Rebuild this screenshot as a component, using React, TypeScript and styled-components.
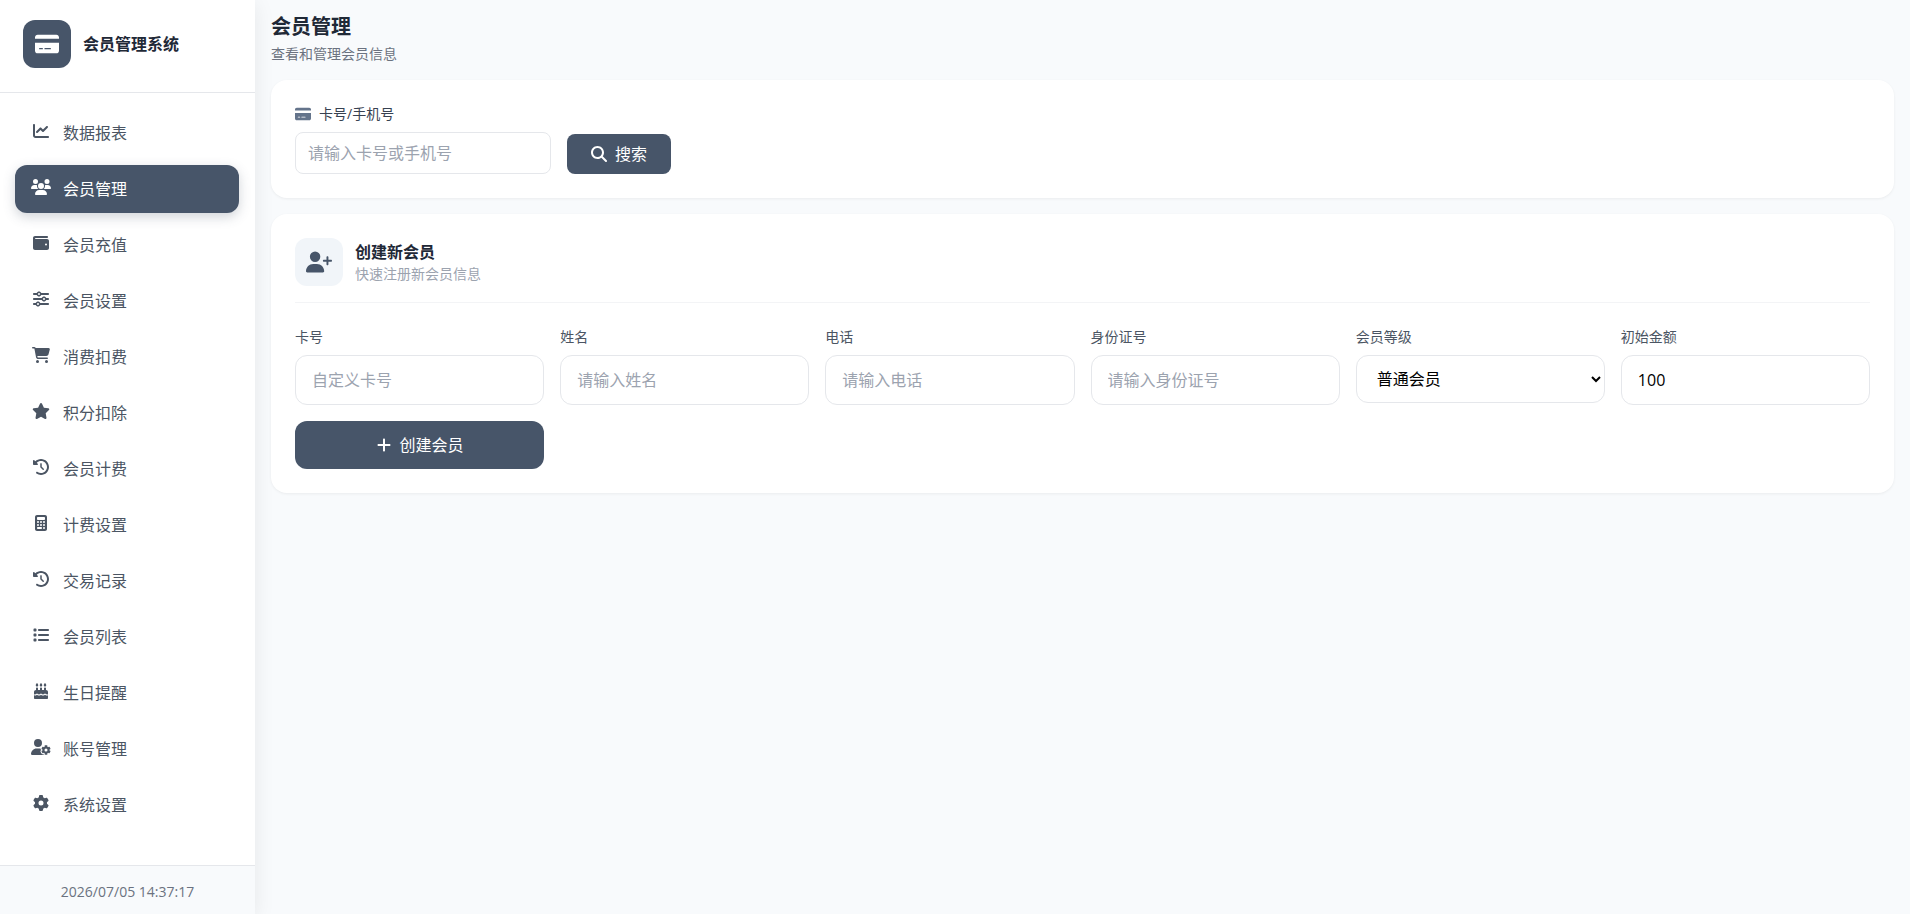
import React from "react";
import styled, { createGlobalStyle, css } from "styled-components";
import type { IconType } from "react-icons";
import {
  FaCakeCandles,
  FaCalculator,
  FaCartShopping,
  FaChartLine,
  FaClockRotateLeft,
  FaCreditCard,
  FaGear,
  FaList,
  FaMagnifyingGlass,
  FaPlus,
  FaSliders,
  FaStar,
  FaUserGear,
  FaUserPlus,
  FaUsers,
  FaWallet,
} from "react-icons/fa6";

const GlobalStyle = createGlobalStyle`
  *, *::before, *::after { box-sizing: border-box; }
  body {
    margin: 0;
    background: #f8fafc;
    color: #1f2937;
    font-family: "Open Sans", "Noto Sans CJK SC", sans-serif;
    font-size: 16px;
    line-height: 24px;
  }
  h1, h2, p { margin: 0; }
  button, input, select { font: inherit; }
  svg { display: block; flex: none; }
`;

const Page = styled.div`
  display: flex;
  min-height: 100vh;
`;

const Sidebar = styled.aside`
  flex: none;
  display: flex;
  flex-direction: column;
  width: 255px;
  background: #fff;
  box-shadow: 0 4px 20px rgba(0, 0, 0, 0.08);
`;

const Brand = styled.div`
  display: flex;
  gap: 12px;
  height: 93px;
  padding: 20px 23px;
  border-bottom: 1px solid #e5e7eb;
`;

const BrandName = styled.span`
  color: #1f2937;
  font-weight: 700;
  line-height: 48px;
`;

const IconTile = styled.span<{ $tone: "dark" | "light" }>`
  display: flex;
  flex: none;
  align-items: center;
  justify-content: center;
  width: 48px;
  height: 48px;
  border-radius: 12px;
  background: ${(p) => (p.$tone === "dark" ? "#475569" : "#f1f5f9")};
  color: ${(p) => (p.$tone === "dark" ? "#fff" : "#475569")};

  svg {
    width: ${(p) => (p.$tone === "dark" ? 24 : 26)}px;
    height: 24px;
  }
`;

const Nav = styled.nav`
  display: flex;
  flex: 1;
  flex-direction: column;
  gap: 8px;
  padding: 16px 16px 16px 15px;
`;

const NavLink = styled.a<{ $active: boolean }>`
  display: flex;
  align-items: center;
  gap: 12px;
  height: 48px;
  padding: 0 16px;
  border-radius: 12px;
  color: #4b5563;
  text-decoration: none;
  ${(p) =>
    p.$active &&
    css`
      background: #475569;
      color: #fff;
      box-shadow: 0 4px 12px rgba(71, 85, 105, 0.25);
    `}
`;

const NavIcon = styled.span`
  padding-bottom: 4px;

  svg {
    width: 20px;
    height: 16px;
  }
`;

const Clock = styled.footer`
  height: 49px;
  padding-top: 14px;
  border-top: 1px solid #e5e7eb;
  background: #f8fafc;
  color: #6b7280;
  font-size: 14px;
  text-align: center;
`;

const Main = styled.main`
  flex: 1;
  min-width: 0;
  padding: 12px 16px;
`;

const PageTitle = styled.h1`
  font-size: 20px;
  font-weight: 700;
  line-height: 30px;
`;

const Subtitle = styled.p<{ $muted?: boolean }>`
  color: ${(p) => (p.$muted ? "#9ca3af" : "#6b7280")};
  font-size: 14px;
  line-height: 20px;
`;

const PageHeader = styled.header`
  display: flex;
  flex-direction: column;
  gap: 2px;
  margin-bottom: 16px;
`;

const Card = styled.section`
  margin-bottom: 16px;
  padding: 24px;
  border-radius: 16px;
  background: #fff;
  box-shadow: 0 1px 3px rgba(0, 0, 0, 0.06);
`;

const SearchRow = styled.form`
  display: flex;
  align-items: flex-end;
  gap: 16px;
`;

const Field = styled.div`
  display: flex;
  flex-direction: column;
  gap: 8px;
  min-width: 0;
`;

const Label = styled.label`
  display: flex;
  align-items: center;
  gap: 8px;
  color: #4b5563;
  font-size: 14px;
  line-height: 20px;
`;

const SearchLabel = styled(Label)`
  color: #374151;

  svg { color: #64748b; }
`;

const control = css`
  width: 100%;
  border: 1px solid #e5e7eb;
  background: #fff;
  color: #000;
`;

const SearchInput = styled.input`
  ${control}
  width: 256px;
  height: 42px;
  padding: 0 12px;
  border-radius: 8px;
  &::placeholder { color: #9ca3af; }
`;

const TextInput = styled.input`
  ${control}
  height: 50px;
  padding: 0 16px;
  border-radius: 12px;
  &::placeholder { color: #9ca3af; }
`;

const Select = styled.select`
  ${control}
  height: 48px;
  padding: 0 16px;
  border-radius: 12px;
`;

const Button = styled.button<{ $large?: boolean }>`
  display: flex;
  align-items: center;
  justify-content: center;
  gap: 8px;
  height: ${(p) => (p.$large ? 48 : 40)}px;
  padding: 0 24px;
  border: 0;
  border-radius: ${(p) => (p.$large ? 12 : 8)}px;
  background: #475569;
  color: #fff;
  cursor: pointer;
`;

const CardHeader = styled.header`
  display: flex;
  align-items: center;
  gap: 12px;
  margin-bottom: 24px;
  padding-bottom: 16px;
  border-bottom: 1px solid #f3f4f6;
`;

const CardTitle = styled.h2`
  font-size: 16px;
  font-weight: 700;
  line-height: 24px;
`;

const FormGrid = styled.form`
  display: grid;
  grid-template-columns: repeat(6, minmax(0, 1fr));
  gap: 16px;
`;

const navItems: { label: string; icon: IconType }[] = [
  { label: "数据报表", icon: FaChartLine },
  { label: "会员管理", icon: FaUsers },
  { label: "会员充值", icon: FaWallet },
  { label: "会员设置", icon: FaSliders },
  { label: "消费扣费", icon: FaCartShopping },
  { label: "积分扣除", icon: FaStar },
  { label: "会员计费", icon: FaClockRotateLeft },
  { label: "计费设置", icon: FaCalculator },
  { label: "交易记录", icon: FaClockRotateLeft },
  { label: "会员列表", icon: FaList },
  { label: "生日提醒", icon: FaCakeCandles },
  { label: "账号管理", icon: FaUserGear },
  { label: "系统设置", icon: FaGear },
];

const textFields = [
  { id: "card", label: "卡号", placeholder: "自定义卡号" },
  { id: "name", label: "姓名", placeholder: "请输入姓名" },
  { id: "phone", label: "电话", placeholder: "请输入电话" },
  { id: "identity", label: "身份证号", placeholder: "请输入身份证号" },
];

const keepPage = (e: React.FormEvent) => e.preventDefault();

export default function App() {
  return (
    <>
      <GlobalStyle />
      <Page>
        <Sidebar>
          <Brand>
            <IconTile $tone="dark">
              <FaCreditCard />
            </IconTile>
            <BrandName>会员管理系统</BrandName>
          </Brand>
          <Nav>
            {navItems.map(({ label, icon: Icon }) => (
              <NavLink
                key={label}
                href="#"
                $active={label === "会员管理"}
                aria-current={label === "会员管理" ? "page" : undefined}
              >
                <NavIcon>
                  <Icon />
                </NavIcon>
                {label}
              </NavLink>
            ))}
          </Nav>
          <Clock>2026/07/05 14:37:17</Clock>
        </Sidebar>

        <Main>
          <PageHeader>
            <PageTitle>会员管理</PageTitle>
            <Subtitle>查看和管理会员信息</Subtitle>
          </PageHeader>

          <Card>
            <SearchRow onSubmit={keepPage}>
              <Field>
                <SearchLabel htmlFor="search">
                  <FaCreditCard size={16} />
                  卡号/手机号
                </SearchLabel>
                <SearchInput id="search" type="text" placeholder="请输入卡号或手机号" />
              </Field>
              <Button type="submit">
                <FaMagnifyingGlass size={16} />
                搜索
              </Button>
            </SearchRow>
          </Card>

          <Card>
            <CardHeader>
              <IconTile $tone="light">
                <FaUserPlus />
              </IconTile>
              <div>
                <CardTitle>创建新会员</CardTitle>
                <Subtitle $muted>快速注册新会员信息</Subtitle>
              </div>
            </CardHeader>
            <FormGrid onSubmit={keepPage}>
              {textFields.map((f) => (
                <Field key={f.id}>
                  <Label htmlFor={f.id}>{f.label}</Label>
                  <TextInput id={f.id} type="text" placeholder={f.placeholder} />
                </Field>
              ))}
              <Field>
                <Label htmlFor="level">会员等级</Label>
                <Select id="level">
                  <option>普通会员</option>
                </Select>
              </Field>
              <Field>
                <Label htmlFor="amount">初始金额</Label>
                <TextInput id="amount" type="text" inputMode="decimal" defaultValue="100" />
              </Field>
              <Button type="submit" $large>
                <FaPlus size={16} />
                创建会员
              </Button>
            </FormGrid>
          </Card>
        </Main>
      </Page>
    </>
  );
}
